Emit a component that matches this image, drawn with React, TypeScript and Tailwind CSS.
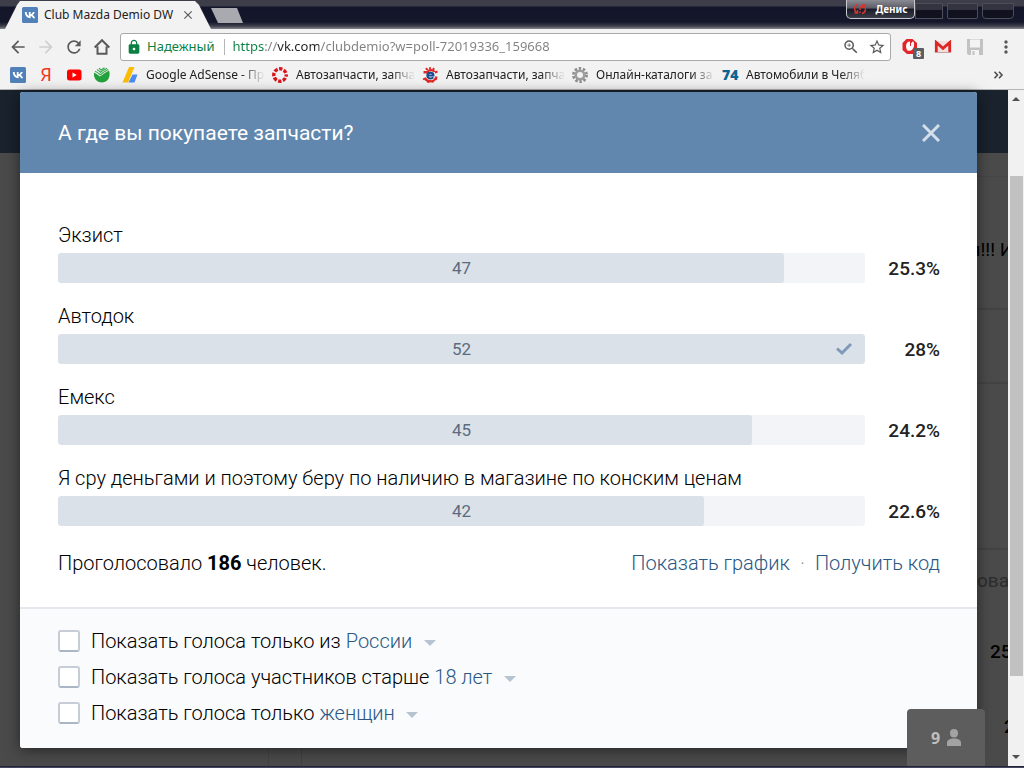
import type { ReactNode } from "react";
import {
  MdArrowBack,
  MdArrowForward,
  MdClose,
  MdLock,
  MdMoreVert,
  MdRefresh,
  MdStarBorder,
  MdZoomIn,
} from "react-icons/md";

const VkIcon = () => (
  <svg viewBox="0 0 16 16" className="size-4 shrink-0" aria-hidden="true">
    <rect width="16" height="16" rx="1.5" fill="#5181b8" />
    <path
      d="M8.500 11.200C5.300 11.200 3.100 9 2.800 5h1.900c.1 2.500 1.200 3.700 2.100 3.900V5h1.800v2.200C9.600 7 10.500 6.100 10.900 5h1.800c-.3 1.400-1.300 2.500-2.100 2.900.8.4 1.900 1.300 2.500 3.300h-2c-.4-1.200-1.300-2-2.500-2.200v2.200z"
      fill="#fff"
    />
  </svg>
);

const YandexIcon = () => (
  <span className="w-4 text-center font-[Roboto,sans-serif] text-[18px] leading-4 text-[#f3361d]">Я</span>
);

const YoutubeIcon = () => (
  <svg viewBox="0 0 16 16" className="size-4 shrink-0" aria-hidden="true">
    <rect x="1" y="2.500" width="14.500" height="11" rx="2.500" fill="#f00" />
    <path d="M6.500 5.500v5L10.700 8z" fill="#fff" />
  </svg>
);

const SberIcon = () => (
  <svg viewBox="0 0 16 16" className="size-4 shrink-0" aria-hidden="true">
    <path d="M0 5.500C2 6.500 4 8 6 9.500 9 7 12 5 15 3.500c2 5.500-1 12-7 12S-.8 10.500 0 5.500z" fill="#23a13c" />
    <path d="M1 4.200C3 5 5 6.500 6.300 7.700 9 5.500 12 3.500 14.200 2.500M3 2.500C4.500 3.500 5.500 4.300 6.500 5.300 8.500 3.500 11 2 13 1.200M5 1.300l2 1.700 3.500-2.300" fill="none" stroke="#3bab50" strokeWidth="1.200" />
  </svg>
);

const AdsenseIcon = () => (
  <svg viewBox="0 0 16 16" className="size-4 shrink-0" aria-hidden="true">
    <path d="M7 0h5.500L6 15.500H.5z" fill="#fbbc05" />
    <path d="M10.500 7.500h5L12.500 15.500H6.500z" fill="#4d8af4" />
  </svg>
);

const RedRingIcon = () => (
  <svg viewBox="0 0 16 16" className="size-4 shrink-0" aria-hidden="true">
    <circle cx="8" cy="8" r="6.200" fill="none" stroke="#d8141c" strokeWidth="3.400" strokeDasharray="3.400 1.470" strokeDashoffset="1.700" />
  </svg>
);

const ExistIcon = () => (
  <svg viewBox="0 0 16 16" className="size-4 shrink-0" aria-hidden="true">
    <path d="M1.500 5.200h4C7 2.500 11 2.500 12.500 5M14.500 9.500c-.8 3.500-4 5-6.500 4.800-2.500-.1-4.500-1.500-5.300-3.500" fill="none" stroke="#e02a26" strokeWidth="2.400" />
    <path d="M3.800 1.200 5.800 3M8 .2v2.500M12 1 11 3M15.500 4.500l-2.500 1M1 12.500l2-1M6 15.800l.6-2M11 15.500l-.8-2M15 12.500l-2-1" stroke="#e02a26" strokeWidth="1.900" />
    <path d="M5.500 8.500h6c0-3.700-6.200-3.700-6.200 0 0 3.500 4.500 3.600 6 1.900" fill="none" stroke="#174a8c" strokeWidth="1.900" />
  </svg>
);

const GearIcon = () => (
  <svg viewBox="0 0 16 16" className="size-4 shrink-0" aria-hidden="true">
    <circle cx="8" cy="8" r="6.500" fill="none" stroke="#8f8f8f" strokeWidth="3" strokeDasharray="2.400 1.684" />
    <circle cx="8" cy="8" r="4.300" fill="none" stroke="#9d9d9d" strokeWidth="2.600" />
  </svg>
);

const SeventyFourIcon = () => (
  <span className="w-4 font-['Open_Sans',sans-serif] text-[14px] leading-4 font-extrabold text-[#0b6491]">74</span>
);

const HomeIcon = () => (
  <svg viewBox="0 0 18 18" className="size-[18px]" aria-hidden="true">
    <path d="M1.700 9.500 9 2.200l7.300 7.300M4.500 8.500v7.300h9V8.500" fill="none" stroke="#5a5a5a" strokeWidth="2" />
  </svg>
);

const bookmarks: { name: string; icon: ReactNode; text?: string }[] = [
  { name: "VK", icon: <VkIcon /> },
  { name: "Яндекс", icon: <YandexIcon /> },
  { name: "YouTube", icon: <YoutubeIcon /> },
  { name: "Сбербанк", icon: <SberIcon /> },
  { name: "AdSense", icon: <AdsenseIcon />, text: "Google AdSense - Пр" },
  { name: "Автозапчасти", icon: <RedRingIcon />, text: "Автозапчасти, запча" },
  { name: "Exist", icon: <ExistIcon />, text: "Автозапчасти, запча" },
  { name: "Каталоги", icon: <GearIcon />, text: "Онлайн-каталоги за" },
  { name: "74.ru", icon: <SeventyFourIcon />, text: "Автомобили в Челяб" },
];

const options = [
  { label: "Экзист", votes: 47, percent: "25.3%", fill: 90 },
  { label: "Автодок", votes: 52, percent: "28%", fill: 100, chosen: true },
  { label: "Емекс", votes: 45, percent: "24.2%", fill: 86 },
  { label: "Я сру деньгами и поэтому беру по наличию в магазине по конским ценам", votes: 42, percent: "22.6%", fill: 80 },
];

const filters = [
  { id: "country", text: "Показать голоса только из", value: "России" },
  { id: "age", text: "Показать голоса участников старше", value: "18 лет" },
  { id: "sex", text: "Показать голоса только", value: "женщин" },
];

function TabStrip() {
  return (
    <div className="flex h-[29px] items-start bg-[linear-gradient(#3d3e49_0,#3d3e49_6px,#13162a_7px,#15182b_22px,#3c3e4c_26px,#85868d_29px)] pl-[5px]">
      <div className="mt-px flex h-7 w-[206px] items-center bg-[#f2f2f2] pr-4 pl-[17px] [clip-path:polygon(0_100%,12px_4px,15px_0,190px_0,194px_4px,100%_100%)]">
        <VkIcon />
        <span className="ml-1.5 flex-1 text-[12px] whitespace-nowrap text-[#222]">Club Mazda Demio DW</span>
        <button type="button" aria-label="Закрыть вкладку" className="text-[#5a5a5a]">
          <MdClose className="size-3.5" />
        </button>
      </div>
      <button
        type="button"
        aria-label="Новая вкладка"
        className="mt-2 h-[15px] w-8 bg-[#a9aaaf] [clip-path:polygon(0_0,26px_0,100%_100%,7px_100%)]"
      />
      <div className="mr-[10px] ml-auto flex items-start">
        <button
          type="button"
          className="flex h-[19px] w-[69px] items-center justify-center gap-2 rounded-b-[5px] border border-t-0 border-[#c9cad0] bg-[linear-gradient(#8a8b93,#5b5c66_45%,#181a27_50%,#3a3c48)] text-[10px] font-bold text-white"
        >
          <svg viewBox="0 0 14 12" className="h-3 w-3.5" aria-hidden="true">
            <path d="M5 1.500C1 2 .5 7 3.500 10M1.500 10h3V7M9 10.500c4-.5 4.500-5.500 1.500-8.500M12.500 2h-3v3M7 3v4M7 8.500V10" fill="none" stroke="#d6342f" strokeWidth="1.500" />
          </svg>
          Денис
        </button>
        <div className="mt-[3px] flex gap-1">
          <button type="button" aria-label="Свернуть" className="h-4 w-7 border border-[#4b4d59] bg-[linear-gradient(#33343f_40%,#10121f_45%)]" />
          <button type="button" aria-label="Развернуть" className="h-4 w-[31px] rounded-b-xs border border-[#4b4d59] bg-[linear-gradient(#33343f_40%,#10121f_45%)]" />
          <button type="button" aria-label="Закрыть" className="h-4 w-[32px] rounded-b-sm border border-[#4b4d59] bg-[linear-gradient(#33343f_40%,#10121f_45%)]" />
        </div>
      </div>
    </div>
  );
}

function Toolbar() {
  return (
    <div className="flex items-center bg-[#f2f2f2] pt-1 pr-2 pl-2">
      <div className="flex w-28 items-center gap-2 text-[#5a5a5a]">
        <button type="button" aria-label="Назад"><MdArrowBack className="size-5" /></button>
        <button type="button" aria-label="Вперёд" className="text-[#cfcfcf]"><MdArrowForward className="size-5" /></button>
        <button type="button" aria-label="Обновить"><MdRefresh className="size-5" /></button>
        <button type="button" aria-label="Домой" className="ml-px"><HomeIcon /></button>
      </div>
      <div className="flex h-7 flex-1 items-center rounded-[3px] border border-[#a9a9a9] bg-white pr-1 pl-[5px] text-[13px]">
        <MdLock className="size-4 text-[#0b8043]" />
        <span className="ml-[5px] text-[#0b8043]">Надежный</span>
        <span className="ml-2.5 h-4 w-px bg-[#b5b5b5]" />
        <input
          type="text"
          aria-label="Адресная строка"
          defaultValue="https://vk.com/clubdemio?w=poll-72019336_159668"
          className="ml-[7px] min-w-0 flex-1 bg-[linear-gradient(90deg,#0b8043_32px,#808080_32px,#808080_45px,#222_45px,#222_87px,#808080_87px)] bg-clip-text text-transparent outline-none"
        />
        <button type="button" aria-label="Масштаб" className="text-[#5a5a5a]"><MdZoomIn className="size-[18px]" /></button>
        <button type="button" aria-label="В закладки" className="ml-2 text-[#5a5a5a]"><MdStarBorder className="size-[18px]" /></button>
      </div>
      <div className="ml-2.5 flex items-center">
        <button type="button" aria-label="AdBlock: 8" className="h-6 w-[23px]">
          <svg viewBox="0 0 23 24" className="h-6 w-[23px]" aria-hidden="true">
            <path d="M5.500 4h6L16 8v7l-4 4H6l-4.500-4V8z" fill="#e2242b" />
            <path d="M6.500 15.500C4 12 5 7 8 6.500c1.500 0 1.500 1.500 2.300 1.500.7 0 .7-1.500 1.700-1.500s1.200 2 1 4c-.3 4-3 6-6.500 5z" fill="#fff" />
            <path d="M9.500 5v6" stroke="#e2242b" />
            <rect x="12" y="13" width="11" height="11" rx="1" fill="#5c5f61" />
            <text x="17.500" y="22" textAnchor="middle" fontSize="9" fontWeight="700" fill="#fff">8</text>
          </svg>
        </button>
        <button type="button" aria-label="Gmail" className="ml-2.5">
          <svg viewBox="0 0 18 14" className="h-3.5 w-[18px]" aria-hidden="true">
            <rect x="1" y="1" width="16" height="12" fill="#f3dede" />
            <path d="M2.300 13V2.500L9 8.300l6.700-5.800V13" fill="none" stroke="#dc2626" strokeWidth="2.800" />
            <path d="M1 12.500h16" stroke="#c9a0a0" />
          </svg>
        </button>
        <button type="button" aria-label="Сохранить" className="ml-3.5">
          <svg viewBox="0 0 18 18" className="size-[18px]" aria-hidden="true">
            <path d="M1 1h16v16H2.500L1 15.500z" fill="#c2c2c2" />
            <path d="M4 1.500h10V9.500H4zM5 12h8v5H5z" fill="#f3f3f3" />
            <path d="M6.500 13h2v4h-2z" fill="#c2c2c2" />
          </svg>
        </button>
        <button type="button" aria-label="Меню" className="ml-3 text-[#5a5a5a]"><MdMoreVert className="size-5" /></button>
      </div>
    </div>
  );
}

function BookmarksBar() {
  return (
    <nav className="flex h-[29px] items-center border-b border-[#b4b4b4] bg-[#f2f2f2] pr-5 pl-1 text-[12px] text-[#222]">
      {bookmarks.map((b) => (
        <a key={b.name} href="#" aria-label={b.name} className={b.text ? "flex items-center gap-2 pr-px pl-1.5" : "flex px-1.5"}>
          {b.icon}
          {b.text && (
            <span className="w-[119px] whitespace-nowrap [mask-image:linear-gradient(90deg,#000_80%,transparent)]">{b.text}</span>
          )}
        </a>
      ))}
      <button type="button" aria-label="Другие закладки" className="ml-auto">
        <svg viewBox="0 0 11 8" className="h-2 w-[11px]" aria-hidden="true">
          <path d="M1.500 .8 4.500 4l-3 3.200M6 .8 9 4 6 7.200" fill="none" stroke="#4d4d4d" strokeWidth="1.600" />
        </svg>
      </button>
    </nav>
  );
}

function DimmedPage() {
  return (
    <div className="absolute inset-0 flex flex-col overflow-hidden bg-[#4a4a4a] text-[19px] whitespace-nowrap text-black" aria-hidden="true">
      <div className="h-[63px] shrink-0 bg-[#19222d]" />
      <div className="flex flex-1">
        <div className="w-[269px] border-r border-[#434343]" />
        <div className="ml-8 flex flex-1 flex-col border-l border-[#414141]">
          <div className="h-6 border-b border-[#454545]" />
          <div className="flex h-[133px] items-center justify-end border-b-2 border-[#434343]">
            <span className="w-[38px] pt-4">я!!! И</span>
          </div>
          <div className="h-[74px] border-b-2 border-[#434343]" />
          <div className="h-[166px] border-b-2 border-[#434343]" />
          <div className="flex h-[62px] items-center justify-end text-[#2c2c2c]">
            <span className="w-[31px]">ова</span>
          </div>
          <div className="flex h-20 items-center justify-end font-medium">
            <span className="w-[18px]">25</span>
          </div>
          <div className="flex h-[70px] items-center justify-end font-medium">
            <span className="w-1">2</span>
          </div>
          <span className="pl-[22px]">Б</span>
        </div>
      </div>
    </div>
  );
}

function PollDialog() {
  return (
    <section role="dialog" aria-labelledby="poll-title" className="relative mt-0.5 mr-[31px] mb-[18px] ml-5 overflow-hidden rounded-[3px] bg-white text-[20px] leading-7 font-light text-black shadow-[0_2px_14px_rgba(0,0,0,0.5)]">
      <header className="flex h-[81px] items-center justify-between bg-[#6287ae] pr-[37px] pl-[38px] text-white">
        <h1 id="poll-title" className="text-[21px] font-normal">А где вы покупаете запчасти?</h1>
        <button type="button" aria-label="Закрыть">
          <svg viewBox="0 0 18 18" className="size-[18px]" aria-hidden="true">
            <path d="m1 1 16 16M17 1 1 17" stroke="#d5dfea" strokeWidth="3" />
          </svg>
        </button>
      </header>

      <div className="pt-12 pr-[37px] pb-[30px] pl-[38px]">
        <ul className="flex flex-col gap-[19px]">
          {options.map((o) => (
            <li key={o.label}>
              <div className="pb-1 leading-7">{o.label}</div>
              <div className="flex items-center">
                <div className="relative h-[30px] flex-1 overflow-hidden rounded-[3px] bg-[#f2f4f8]">
                  <div className="h-full rounded-[3px] bg-[#dae1e8]" style={{ width: `${o.fill}%` }} />
                  <span className="absolute inset-0 flex items-center justify-center text-[17px] font-normal text-[#5d6b7e]">{o.votes}</span>
                  {o.chosen && (
                    <svg viewBox="0 0 18 14" className="absolute top-2 right-3 h-3.5 w-[18px]" aria-label="Ваш голос">
                      <path d="m2 6.500 5 4.500 9-9" fill="none" stroke="#7f9ab8" strokeWidth="3" />
                    </svg>
                  )}
                </div>
                <div className="w-[75px] pt-0.5 text-right text-[19px] font-medium text-[#222]">{o.percent}</div>
              </div>
            </li>
          ))}
        </ul>
        <div className="mt-[23px] flex items-center justify-between">
          <p>
            Проголосовало <b className="font-bold">186</b> человек.
          </p>
          <div className="flex items-center gap-2.5 text-[#2a5885]">
            <a href="#">Показать график</a>
            <span className="text-[#939393]">·</span>
            <a href="#">Получить код</a>
          </div>
        </div>
      </div>

      <div className="flex flex-col gap-2 border-t-2 border-[#e4e8ec] bg-[#fafbfc] pt-[18px] pb-[21px] pl-[38px]">
        {filters.map((f) => (
          <div key={f.id} className="flex items-center">
            <input
              id={f.id}
              type="checkbox"
              className="size-[22px] appearance-none rounded-[3px] border-2 border-[#c6cdd6] border-b-[#a9b6c6] bg-white"
            />
            <label htmlFor={f.id} className="ml-[11px]">{f.text}</label>
            <select aria-label={f.text} className="ml-[5px] appearance-none bg-transparent text-[#2a5885]">
              <option>{f.value}</option>
            </select>
            <svg viewBox="0 0 12 6" className="mt-1 ml-[11px] h-1.5 w-3" aria-hidden="true">
              <path d="M0 0h12L6 6z" fill="#b6c3d1" />
            </svg>
          </div>
        ))}
      </div>
    </section>
  );
}

function Scrollbar() {
  return (
    <div className="flex w-4 flex-col items-center bg-[#f1f1f1]" aria-hidden="true">
      <svg viewBox="0 0 8 4" className="mt-[7px] h-1 w-2"><path d="M0 4 4 0l4 4z" fill="#505050" /></svg>
      <div className="mt-[75px] mb-[79px] w-full flex-1 pr-px pl-0.5">
        <div className="h-full bg-[#c1c1c1]" />
      </div>
      <svg viewBox="0 0 8 4" className="mb-[7px] h-1 w-2"><path d="m0 0 4 4 4-4z" fill="#505050" /></svg>
    </div>
  );
}

export default function App() {
  return (
    <div className="flex min-h-screen flex-col bg-[#1a1d30] font-['Noto_Sans',sans-serif]">
      <TabStrip />
      <Toolbar />
      <BookmarksBar />
      <div className="flex flex-1 font-[Roboto,sans-serif]">
        <main className="relative min-w-0 flex-1">
          <DimmedPage />
          <PollDialog />
          <button
            type="button"
            aria-label="Чат: 9"
            className="absolute right-[23px] bottom-0 flex h-[57px] w-[78px] items-center justify-center gap-[7px] rounded-t-[4px] bg-[#5d5d5d] font-['Open_Sans',sans-serif] text-[16px] font-bold text-[#bfbfbf]"
          >
            9
            <svg viewBox="0 0 14 17" className="h-[17px] w-3.5" aria-hidden="true">
              <ellipse cx="7" cy="4.200" rx="4" ry="4.200" fill="#a3a3a3" />
              <path d="M0 17v-3c0-3 2.500-4.500 7-4.500s7 1.500 7 4.500v3z" fill="#a3a3a3" />
            </svg>
          </button>
        </main>
        <Scrollbar />
      </div>
      <footer className="h-0.5 bg-[linear-gradient(#10132a,#55586a)]" />
    </div>
  );
}
